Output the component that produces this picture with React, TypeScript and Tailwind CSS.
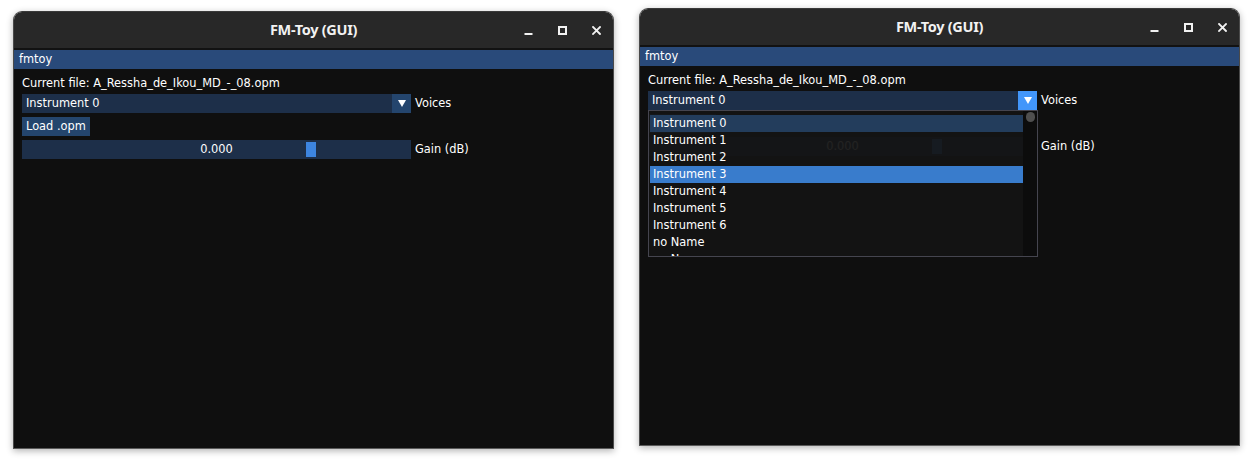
import type { ReactNode } from "react";

const FILE = "A_Ressha_de_Ikou_MD_-_08.opm";
const instruments = [
  "Instrument 0",
  "Instrument 1",
  "Instrument 2",
  "Instrument 3",
  "Instrument 4",
  "Instrument 5",
  "Instrument 6",
  "no Name",
  "no Name",
];

function DownArrow() {
  return (
    <svg width="8" height="7" viewBox="0 0 8 7">
      <polygon points="0,0 8,0 4,7" fill="#ffffff" />
    </svg>
  );
}

function TitleButtons() {
  return (
    <div className="flex items-center justify-end gap-[10px] pr-[5px]">
      <div className="w-[24px] h-[24px] flex items-center justify-center">
        <svg width="9" height="9" viewBox="0 0 9 9">
          <rect x="0.5" y="7" width="8" height="2" fill="#f2f2f2" />
        </svg>
      </div>
      <div className="w-[24px] h-[24px] flex items-center justify-center">
        <svg width="9" height="9" viewBox="0 0 9 9">
          <rect x="1" y="1" width="7" height="7" fill="none" stroke="#f2f2f2" strokeWidth="2" />
        </svg>
      </div>
      <div className="w-[24px] h-[24px] flex items-center justify-center">
        <svg width="9" height="9" viewBox="0 0 9 9">
          <path d="M1 1 L8 8 M8 1 L1 8" stroke="#f2f2f2" strokeWidth="1.8" strokeLinecap="square" />
        </svg>
      </div>
    </div>
  );
}

function ComboPopup() {
  return (
    <div className="absolute left-0 top-full z-10 w-[390px] h-[147px] flex border border-[#45454f] bg-[#141414]/94">
      <div className="flex-1 pt-[4px] pl-[1px] overflow-hidden">
        {instruments.map((name, i) => (
          <div
            key={i}
            className={
              "h-[17px] leading-[17px] pl-[3px] " +
              (i === 3 ? "bg-[#397ccc]" : i === 0 ? "bg-[#233d5c]" : "")
            }
          >
            {name}
          </div>
        ))}
      </div>
      <div className="w-[14px] bg-[#0c0c0c] pt-[1px] flex justify-center">
        <div className="w-[9px] h-[10px] rounded-full bg-[#4f4f4f]" />
      </div>
    </div>
  );
}

function Row({ children, label }: { children: ReactNode; label?: string }) {
  return (
    <div className="mt-[4px] flex items-center">
      {children}
      {label && <span className="ml-[4px] leading-[19px]">{label}</span>}
    </div>
  );
}

function FmWindow({ open, className }: { open: boolean; className: string }) {
  return (
    <div
      className={
        "w-[601px] h-[438px] flex flex-col rounded-t-[9px] overflow-hidden border border-[#4a4a4a] border-t-[#3a3a3a] border-b-[#5a5a5a] shadow-[0_2px_7px_rgba(0,0,0,0.3)] " +
        className
      }
    >
      <div className="h-[38px] shrink-0 grid grid-cols-[1fr_auto_1fr] items-center bg-[#282828] border-b-2 border-[#121212]">
        <div />
        <div className="font-['Noto_Sans',sans-serif] font-bold text-[14.5px] tracking-[-0.3px] text-[#f2f2f2]">
          FM-Toy (GUI)
        </div>
        <TitleButtons />
      </div>
      <div className="flex-1 flex flex-col bg-[#0f0f0f] text-white text-[11.4px] font-['DejaVu_Sans',sans-serif]">
        <div className="h-[19px] shrink-0 bg-[#294a7a] pl-[5px] leading-[19px]">fmtoy</div>
        <div className="px-[8px] pt-[8px]">
          <div className="h-[13px] leading-[13px]">Current file: {FILE}</div>
          <Row label="Voices">
            <div className="relative w-[389px] h-[19px] flex bg-[#1d2f49]">
              <span className="flex-1 pl-[4px] leading-[19px]">Instrument 0</span>
              <div
                className={
                  "w-[19px] h-[19px] flex items-center justify-center " +
                  (open ? "bg-[#4296fa]" : "bg-[#24456d]")
                }
              >
                <DownArrow />
              </div>
              {open && <ComboPopup />}
            </div>
          </Row>
          <Row>
            <div className="h-[19px] px-[4px] leading-[19px] bg-[#24456d]">Load .opm</div>
          </Row>
          <Row label="Gain (dB)">
            <div className="relative w-[389px] h-[19px] bg-[#1d2f49] text-center leading-[19px]">
              0.000
              <div className="absolute left-[284px] top-[2px] w-[10px] h-[15px] bg-[#3d85e0]" />
            </div>
          </Row>
        </div>
      </div>
    </div>
  );
}

export default function App() {
  return (
    <div className="w-[1256px] h-[466px] bg-white flex items-start pl-[13px] gap-[25px]">
      <FmWindow open={false} className="mt-[11px]" />
      <FmWindow open className="mt-[8px]" />
    </div>
  );
}
